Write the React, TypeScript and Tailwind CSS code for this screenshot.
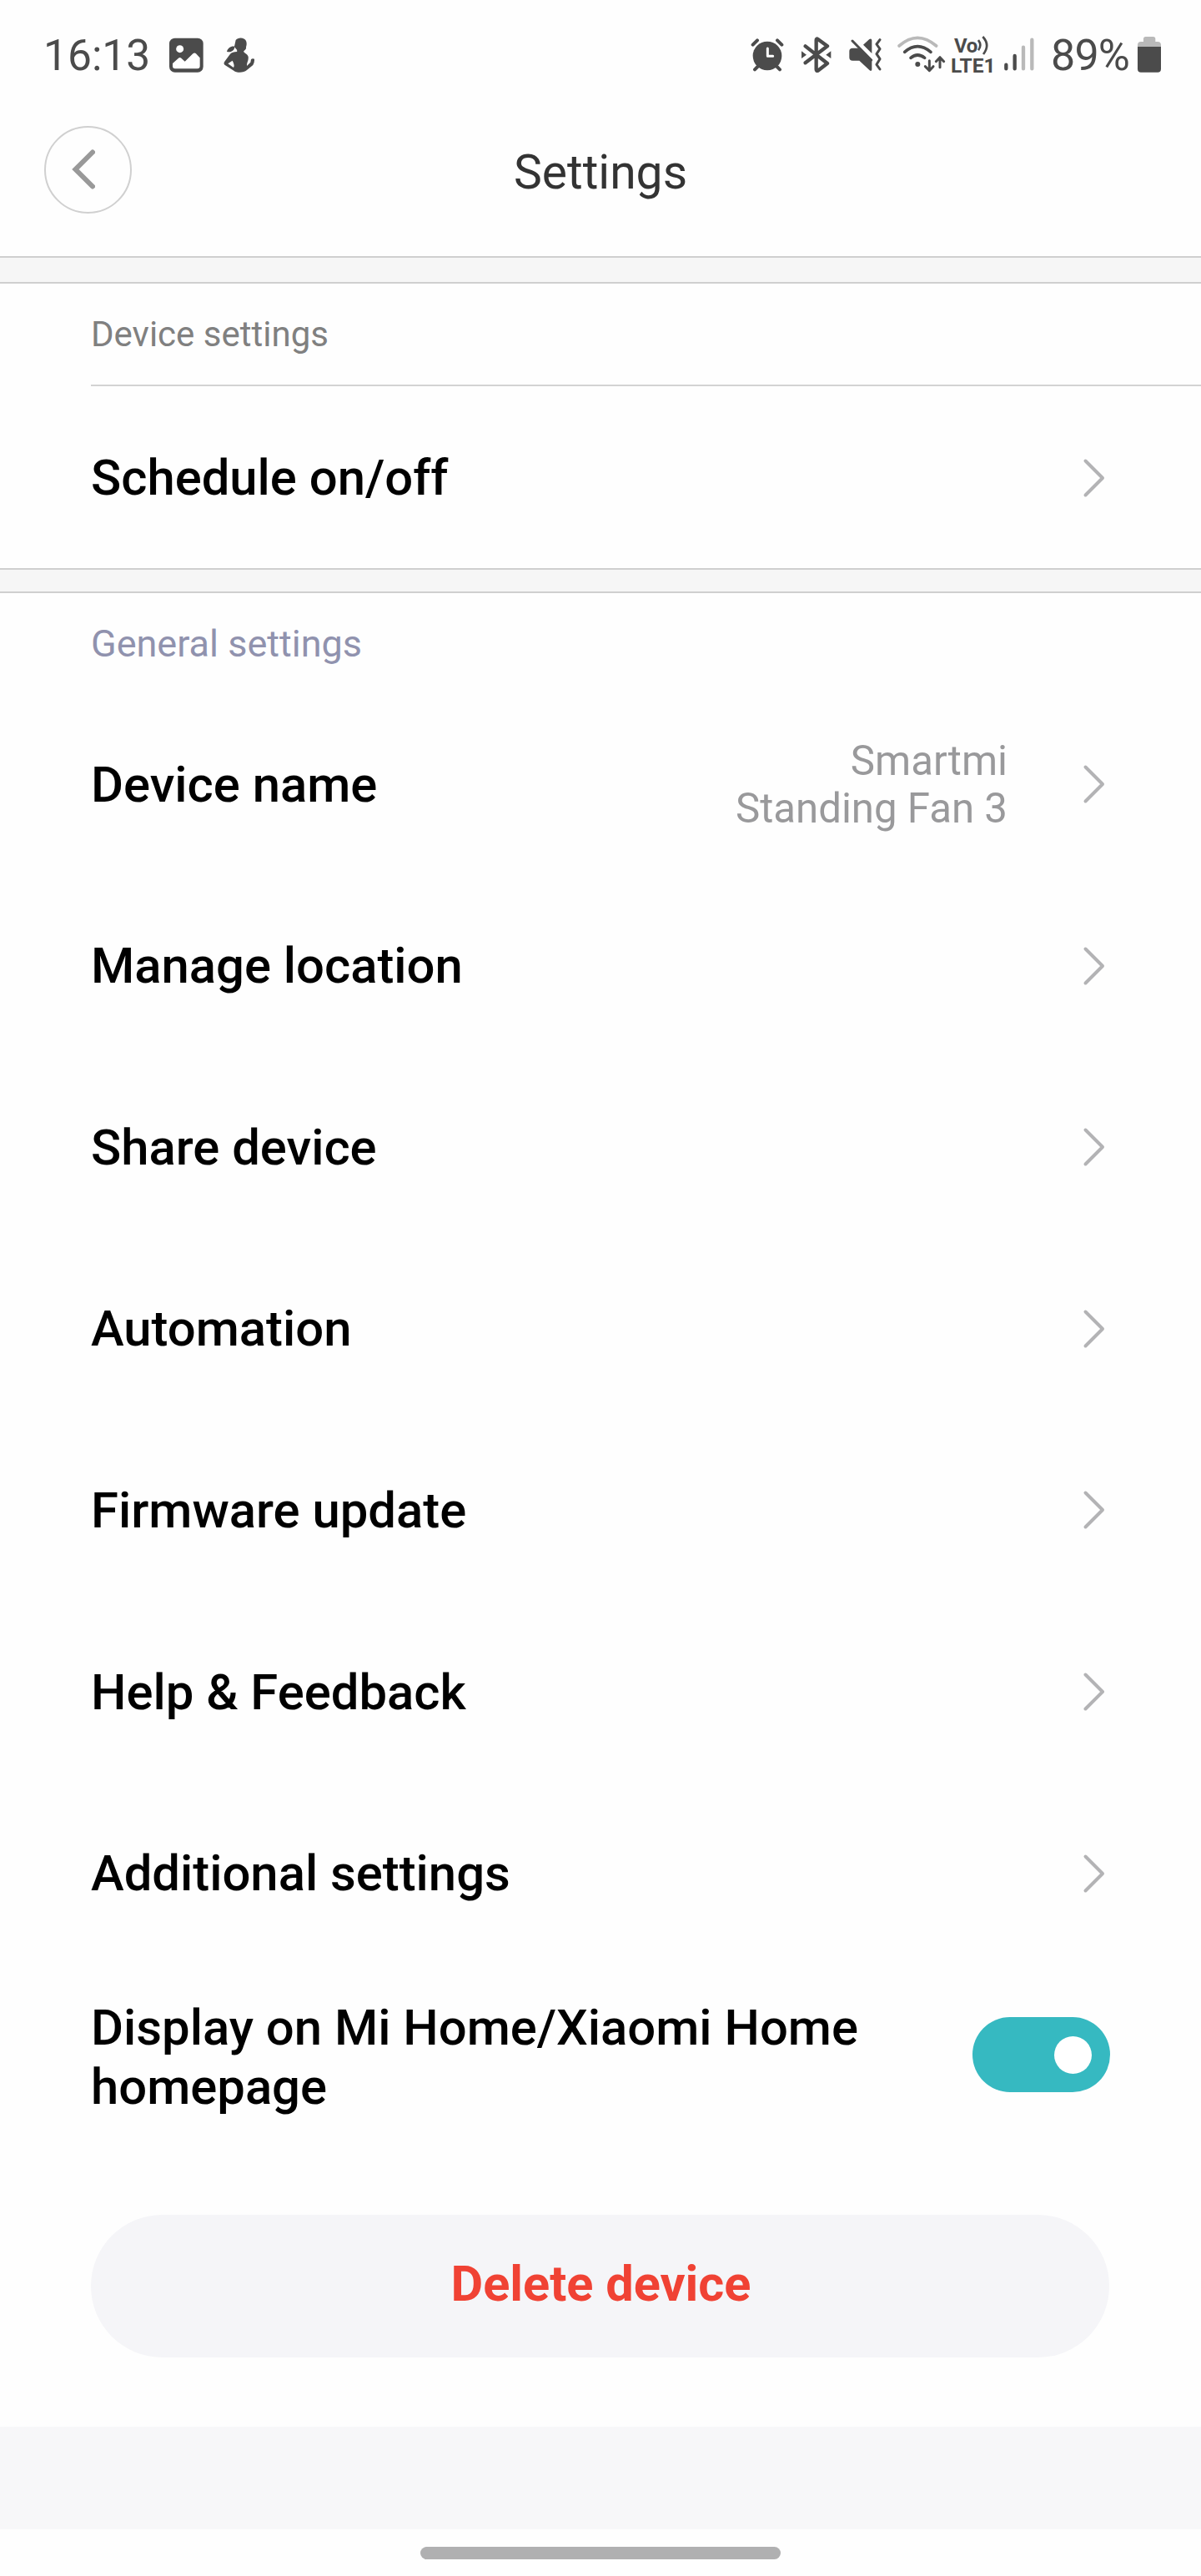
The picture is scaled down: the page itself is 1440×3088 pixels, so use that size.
import React from "react";

const generalItems = [
  "Manage location",
  "Share device",
  "Automation",
  "Firmware update",
  "Help & Feedback",
  "Additional settings",
];

const Chevron: React.FC = () => (
  <svg width="28" height="48" viewBox="0 0 28 48" fill="none" stroke="#b3b3b5" strokeWidth="4" strokeLinecap="round" strokeLinejoin="round">
    <path d="M3.5 3.5 24 24 3.5 44.5" />
  </svg>
);

const Row: React.FC<{ label: string; value?: string }> = ({ label, value }) => (
  <div className="flex h-[217.6px] items-center pr-[114px] pl-[109px]">
    <span className="pt-[3px] text-[59.8px] font-medium">{label}</span>
    {value && (
      <span className="ml-auto w-[340px] pt-[3px] text-right text-[49.2px] leading-[57px] text-[#99999b]">{value}</span>
    )}
    <span className={value ? "ml-[90px]" : "ml-auto"}>
      <Chevron />
    </span>
  </div>
);

const Divider: React.FC<{ className: string }> = ({ className }) => (
  <div className={`border-y-2 border-[#cfcfcf] bg-[#f6f6f6] ${className}`} />
);

const StatusBar: React.FC = () => (
  <div className="flex h-[132px] items-center pr-12 pl-[52px] text-[#4b4b4b]">
    <span className="w-[151px] pt-px text-[51.5px] leading-none">16:13</span>
    {/* gallery */}
    <svg width="41" height="44" viewBox="519 72 123 132" fill="currentColor">
      <rect x="519" y="77" width="122" height="123" rx="20" />
      <circle cx="557" cy="116" r="13.500" fill="#fff" />
      <path d="M531 168 552 149Q557 145 562 149L575 161 604 133Q610 128 615 133L629 148V178Q629 187 620 187H540Q531 187 531 178Z" fill="#fff" />
    </svg>
    {/* fitness */}
    <svg className="ml-6" width="38" height="44" viewBox="714 72 114 132" fill="currentColor">
      <path d="M758 84C766 73 790 74 795 87 799 97 796 105 795 109 797 119 789 120 786 125 790 132 801 134 803 144 805 158 797 165 798 177L811 164 813 154Q817 149 825 152 826 164 820 174L797 193C788 203 758 202 752 195L718 173Q713 168 718 161L738 134Q746 126 762 126 765 121 758 115L754 109C753 122 742 130 726 126 729 113 741 105 753 107Z" />
      <path d="m746 158-16 11 20 14q5-9-4-25Z" fill="#fff" />
    </svg>

    {/* alarm */}
    <svg className="ml-auto" width="40" height="44" viewBox="60 42 120 132" fill="none" stroke="currentColor" strokeWidth="12" strokeLinecap="round">
      <circle cx="120" cy="111" r="52" fill="currentColor" stroke="none" />
      <path d="M68 71 84 55M156 55l16 16M75 160l10-10M165 160l-10-10" />
      <path d="M121 84v28h19" stroke="#fff" strokeWidth="9" strokeLinejoin="round" />
    </svg>
    {/* bluetooth */}
    <svg className="ml-5" width="38" height="44" viewBox="240 42 114 132" fill="none" stroke="currentColor" strokeWidth="13" strokeLinecap="round" strokeLinejoin="round">
      <path d="M257 76 336 138 302 164Q296 166 296 160V54Q296 47 302 51L336 76 257 136" />
      <path d="M243 94v26l18-13ZM349 94v26l-18-13Z" fill="currentColor" stroke="none" />
    </svg>
    {/* vibrate */}
    <svg className="ml-5" width="39" height="44" viewBox="413 42 117 132" fill="currentColor">
      <path d="M426 83H447L495 130V160Q494 168 487 163L450 128H426Q414 128 414 117V94Q414 83 426 83ZM464 71 486 51Q494 46 495 55V102Z" />
      <path d="m425 57 68 69M524 53 512 69 524 86 512 104 524 122 512 142 524 159" fill="none" stroke="currentColor" strokeWidth="9" strokeLinecap="round" strokeLinejoin="round" />
    </svg>
    {/* wifi with traffic arrows */}
    <svg className="ml-[19px]" width="58" height="44" viewBox="588 42 174 132" fill="none" stroke="currentColor" strokeWidth="11" strokeLinecap="round" overflow="visible">
      <path d="M594 75Q660 17 728 75" stroke="#b9b9b9" />
      <path d="M614 97Q660 57 708 97M636 118Q660 98 686 118" />
      <circle cx="661" cy="141" r="9" fill="currentColor" stroke="none" />
      <path d="M703 128v35M688 149l15 15 14-15M741 152v-36M727 131l14-15 14 15" strokeWidth="9" strokeLinejoin="round" />
    </svg>
    <div className="ml-[6px] w-[52px] pt-px font-bold">
      <div className="flex h-[23px] items-center pl-1">
        <span className="text-[24px] leading-none tracking-[-0.5px]">Vo</span>
        <svg width="14" height="24" viewBox="162 42 42 72" fill="none" stroke="currentColor" strokeWidth="8">
          <path d="M165 57q14 18 0 37M181 45q28 30 2 63" />
        </svg>
      </div>
      <div className="text-[24.5px] leading-[23px]">LTE1</div>
    </div>
    {/* signal */}
    <svg className="ml-[12px]" width="36" height="44" viewBox="254 42 108 132" fill="none" stroke="currentColor" strokeWidth="13" strokeLinecap="round">
      <path d="M261 143v14M292 111v46" />
      <path d="M323 80v77M354 53v104" stroke="#b9b9b9" />
    </svg>
    <span className="ml-5 w-[104px] pt-px text-[52px] leading-none tracking-[-0.8px]">89%</span>
    {/* battery */}
    <svg width="28" height="44" viewBox="732 42 84 132" fill="currentColor">
      <path d="M732 80V72Q732 60 744 60H753V50Q753 42 761 42H788Q796 42 796 50V60H804Q816 60 816 72V80Z" fill="#b9b9b9" />
      <path d="M732 78h84v80q0 12-12 12h-60q-12 0-12-12Z" />
    </svg>
  </div>
);

const App: React.FC = () => {
  return (
    <div className="h-[3088px] w-[1440px] overflow-hidden bg-[#fefefe] font-[Roboto,sans-serif] text-black">
      <StatusBar />

      <header className="grid h-[175px] grid-cols-[105px_1fr_105px] items-start px-[53px]">
        <button className="mt-[19px] flex size-[105px] items-center justify-center rounded-full border-2 border-[#d0d0d0] pr-[11px] pb-px">
          <svg width="28" height="48" viewBox="0 0 28 48" fill="none" stroke="#999" strokeWidth="6" strokeLinecap="round">
            <path d="M25 3.500 4.500 24 25 44.500" />
          </svg>
        </button>
        <h1 className="mt-[42px] text-center text-[57px] leading-[66px] text-[#333]">Settings</h1>
      </header>

      <Divider className="h-[33px]" />
      <h2 className="flex h-[121px] items-center pl-[109px] text-[42px] text-[#808080]">Device settings</h2>
      <div className="ml-[109px] h-[2px] bg-[#d3d3d3]" />
      <div className="h-[218px] pt-px">
        <Row label="Schedule on/off" />
      </div>

      <Divider className="h-[30px]" />
      <h2 className="flex h-[120.2px] items-center pt-0.5 pl-[109px] text-[45px] text-[#9092ae]">General settings</h2>
      <Row label="Device name" value="Smartmi Standing Fan 3" />
      {generalItems.map((item) => (
        <Row key={item} label={item} />
      ))}
      <div className="flex h-[217.6px] items-center justify-between pr-[109px] pl-[109px]">
        <span className="w-[960px] pt-2 text-[59.8px] leading-[71px] font-medium">
          Display on Mi Home/Xiaomi Home homepage
        </span>
        <div className="flex h-[90px] w-[165px] items-center justify-end rounded-full bg-[#36b9c1] pr-[22px]">
          <div className="size-[45px] rounded-full bg-white" />
        </div>
      </div>

      <button className="mx-[109px] mt-[83px] flex h-[171px] w-[1221px] items-center justify-center rounded-full bg-[#f5f5f8] pb-[3px] pl-0.5 text-[59.5px] font-bold text-[#f04234]">
        Delete device
      </button>

      <div className="mt-[83px] h-[123px] bg-[#f7f7f9]" />
      <div className="mx-auto mt-[21px] h-[15px] w-[432px] rounded-full bg-[#b0b0b1]" />
    </div>
  );
};

export default App;
